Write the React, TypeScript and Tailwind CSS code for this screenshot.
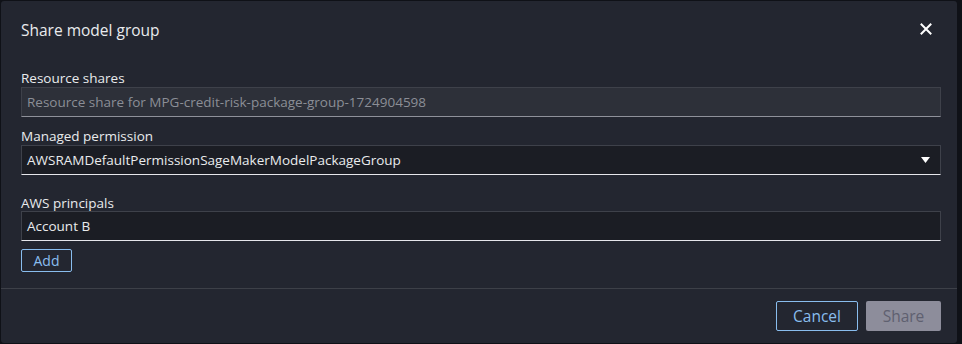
import React from "react";

export default function App() {
  return (
    <div
      className="w-[962px] h-[344px] bg-[#0f1117] overflow-hidden"
      style={{ fontFamily: '"Open Sans", "Noto Sans", sans-serif' }}
    >
      <div className="ml-[1px] mt-[1px] w-[956px] h-[342px] bg-[#232630] rounded-[3px] flex flex-col">
        <div className="h-[60px] pl-5 pr-[25px] flex items-center justify-between">
          <div className="text-[15.5px] text-[#e9ebed]">Share model group</div>
          <svg width="12" height="12" viewBox="0 0 12 12" className="-mt-[4px]">
            <path d="M1.5 1.5 L10.5 10.5 M10.5 1.5 L1.5 10.5" stroke="#ffffff" strokeWidth="2" strokeLinecap="square" />
          </svg>
        </div>
        <div className="pl-5 pr-4 pt-[6px] h-[227px] flex flex-col">
          <div className="text-[13.5px] leading-[20px] h-[20px] pt-[1px] text-[#e9ebed]">Resource shares</div>
          <div className="h-[30px] bg-[#2d3039] border border-[#3e414a] border-b-[#8f919a] px-[5px] flex items-center text-[13.5px] text-[#8b8e96]">
            Resource share for MPG-credit-risk-package-group-1724904598
          </div>
          <div className="mt-[8px] text-[13.5px] leading-[20px] h-[20px] pt-[1px] text-[#e9ebed]">Managed permission</div>
          <div className="h-[30px] bg-[#1b1d24] border border-[#3e414a] border-b-[#e6e6eb] pl-[5px] pr-[10px] flex items-center justify-between text-[13.5px] text-[#e9ebed]">
            <span>AWSRAMDefaultPermissionSageMakerModelPackageGroup</span>
            <svg width="9" height="6" viewBox="0 0 9 6">
              <path d="M0 0 L9 0 L4.5 6 Z" fill="#ffffff" />
            </svg>
          </div>
          <div className="mt-[17px] text-[13.5px] leading-[20px] h-[19px] pt-[1px] text-[#e9ebed]">AWS principals</div>
          <div className="h-[30px] bg-[#1b1d24] border border-[#3e414a] border-b-[#e6e6eb] px-[5px] flex items-center text-[13.5px] text-[#e9ebed]">
            Account B
          </div>
          <div className="mt-[8px]">
            <button className="w-[51px] h-[23px] border border-[#89bdee] rounded-[2px] text-[14px] text-[#89bdee] flex items-center justify-center">
              Add
            </button>
          </div>
        </div>
        <div className="h-[1px] bg-[#3d4048]" />
        <div className="pt-[12px] pr-[16px] flex justify-end gap-[8px]">
          <button className="w-[82px] h-[30px] border border-[#89bdee] rounded-[2px] text-[15.5px] text-[#89bdee] flex items-center justify-center pt-[1px]">
            Cancel
          </button>
          <button className="w-[75px] h-[30px] bg-[#8d8d9b] rounded-[2px] text-[15.5px] text-[#5f6070] flex items-center justify-center pt-[1px]">
            Share
          </button>
        </div>
      </div>
    </div>
  );
}
